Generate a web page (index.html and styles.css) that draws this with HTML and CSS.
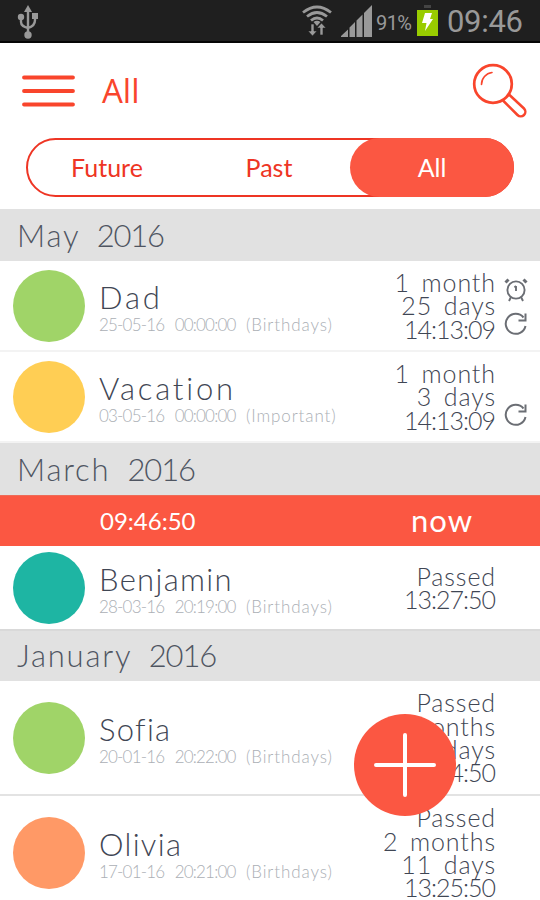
FILE: index.html
```html
<!DOCTYPE html>
<html lang="en">
<head>
  <meta charset="UTF-8">
  <meta name="viewport" content="width=device-width, initial-scale=1.0">
  <title>All events</title>
  <link rel="stylesheet" href="styles.css">
</head>
<body>

  <div class="status-bar">
    <svg class="usb" width="22" height="34" viewBox="0 0 22 34">
      <path d="M11 4v25M4 13v4c0 4 3 5 7 6M18 11v4c0 5-3 7-7 8" fill="none" stroke="#999" stroke-width="2.4"/>
      <path d="M11 0l4 7H7z" fill="#999"/>
      <circle cx="4" cy="12" r="3.2" fill="#999"/>
      <path d="M15 8h6v6h-6z" fill="#999"/>
      <circle cx="11" cy="30" r="3.7" fill="#999"/>
    </svg>
    <svg class="wifi" width="30" height="32" viewBox="0 0 30 32">
      <g fill="none" stroke="#999" stroke-width="2.8">
        <path d="M1 7.500q14-11 28 0"/>
        <path d="M5 11.500q10-8 20 0"/>
        <path d="M9 15.500q6-5 12 0"/>
      </g>
      <path d="M11.500 17q3.500-2.500 7 0L15 21z" fill="#999"/>
      <path d="M9 19h3v7h3l-4.500 5L6 26h3zM18 30h3v-7h3l-4.500-5-4.500 5h3z" fill="#999" stroke="#1f1f1f" stroke-width=".6"/>
    </svg>
    <svg class="signal" width="32" height="32" viewBox="0 0 32 32">
      <path d="M0 32V31L7 24.500V32zM8.500 32V22.500L14 17V32zM15.500 32V15.500L21.500 9.500V32zM23 32V8L31 0V32z" fill="#999"/>
    </svg>
    <span class="percent">91%</span>
    <svg class="battery" width="21" height="32" viewBox="0 0 21 32">
      <path d="M7 0h7v3H7z" fill="#444"/>
      <path d="M0 5h21v26H0z" fill="#99cc00"/>
      <path d="M8 8h7l-2 6h3L8 26l1.500-8H5z" fill="#fff"/>
    </svg>
    <span class="clock">09:46</span>
  </div>

  <header class="header">
    <svg class="menu" width="54" height="34" viewBox="0 0 54 34">
      <path d="M3 3.500h49M3 17h49M3 30.500h49" stroke="#f9452c" stroke-width="3.800" stroke-linecap="round"/>
    </svg>
    <h1>All</h1>
    <svg class="search" width="56" height="56" viewBox="0 0 56 56" fill="none" stroke="#f9452c">
      <circle cx="21" cy="21" r="18.800" stroke-width="2.700"/>
      <path d="M9.500 21.500a12 12 0 0 1 10.500-12" stroke-width="1.600" stroke-linecap="round"/>
      <path d="M31 37.500l14.500 14.500a4.500 4.500 0 0 0 6.500-6.500l-15-14" stroke-width="2.500"/>
    </svg>
  </header>

  <nav class="tabs">
    <a class="tab">Future</a>
    <a class="tab">Past</a>
    <a class="tab active">All</a>
  </nav>

  <main>
    <h2 class="month">May <span class="year">2016</span></h2>
    <div class="event">
      <span class="dot green"></span>
      <div class="info">
        <p class="name wide">Dad</p>
        <p class="date">25-05-16 00:00:00 <span class="category">(Birthdays)</span></p>
      </div>
      <p class="left">1 month<br>25 days<br><span class="time">14:13:09</span></p>
      <div class="icons">
        <svg width="24" height="24" viewBox="0 0 24 24" fill="none" stroke="#6b6e74" stroke-width="1.900">
          <circle cx="12" cy="12" r="8.600"/>
          <path d="M12 8v5M10.500 9.500L12 8M7 19l-2 4M17 19l2 4"/>
          <path d="M1.500 4.500l3-3M22.500 4.500l-3-3" stroke-width="3"/>
        </svg>
        <svg width="24" height="24" viewBox="0 0 24 24" fill="none" stroke="#6b6e74" stroke-width="2">
          <path d="M19.500 5.500A10 10 0 1 0 21.500 14M21.500 1.500v7h-7"/>
        </svg>
      </div>
    </div>
    <div class="event">
      <span class="dot yellow"></span>
      <div class="info">
        <p class="name wide">Vacation</p>
        <p class="date">03-05-16 00:00:00 <span class="category">(Important)</span></p>
      </div>
      <p class="left">1 month<br>3 days<br><span class="time">14:13:09</span></p>
      <div class="icons">
        <svg width="24" height="24" viewBox="0 0 24 24" fill="none" stroke="#6b6e74" stroke-width="2">
          <path d="M19.500 5.500A10 10 0 1 0 21.500 14M21.500 1.500v7h-7"/>
        </svg>
      </div>
    </div>

    <h2 class="month">March <span class="year">2016</span></h2>
    <div class="now">
      <span class="now-time">09:46:50</span>
      <span class="now-label">now</span>
    </div>
    <div class="event short">
      <span class="dot teal"></span>
      <div class="info">
        <p class="name">Benjamin</p>
        <p class="date">28-03-16 20:19:00 <span class="category">(Birthdays)</span></p>
      </div>
      <p class="left">Passed<br><span class="time">13:27:50</span></p>
      <div class="icons"></div>
    </div>

    <h2 class="month last">January <span class="year">2016</span></h2>
    <div class="event tall">
      <span class="dot green"></span>
      <div class="info">
        <p class="name">Sofia</p>
        <p class="date">20-01-16 20:22:00 <span class="category">(Birthdays)</span></p>
      </div>
      <p class="left">Passed<br>2 months<br>8 days<br><span class="time">13:24:50</span></p>
      <div class="icons"></div>
    </div>
    <div class="event tall">
      <span class="dot orange"></span>
      <div class="info">
        <p class="name">Olivia</p>
        <p class="date">17-01-16 20:21:00 <span class="category">(Birthdays)</span></p>
      </div>
      <p class="left">Passed<br>2 months<br>11 days<br><span class="time">13:25:50</span></p>
      <div class="icons"></div>
    </div>
  </main>

  <button class="add" aria-label="Add">
    <svg width="62" height="64" viewBox="0 0 62 64">
      <path d="M31 2v60M2 32h58" stroke="#fff" stroke-width="4" stroke-linecap="round"/>
    </svg>
  </button>

</body>
</html>
```

FILE: styles.css
```css
* {
  box-sizing: border-box;
}

body {
  margin: 0;
  height: 900px;
  overflow: hidden;
  position: relative;
  background: #fff;
  font-family: Lato, "Liberation Sans", sans-serif;
  font-weight: 300;
  font-variant-ligatures: none;
  color: #3f4654;
}

h1,
h2,
p {
  margin: 0;
  font-weight: 300;
}

svg {
  display: block;
  flex: none;
}

/* status bar */
.status-bar {
  display: flex;
  align-items: center;
  height: 43px;
  padding: 0 18px 0 17px;
  background: #1f1f1f;
  border-bottom: 2px solid #050505;
  font-family: Roboto, sans-serif;
  font-weight: 400;
  color: #999;
}

.usb {
  margin-top: 3px;
}

.wifi {
  margin-left: auto;
}

.signal {
  margin-left: 9px;
}

.percent {
  width: 37px;
  margin-left: 3px;
  padding-top: 4px;
  font-size: 20px;
  letter-spacing: -0.6px;
}

.battery {
  margin-left: 4px;
}

.clock {
  width: 75px;
  margin-left: 9px;
  padding-top: 2px;
  font-size: 31px;
  letter-spacing: -0.3px;
}

/* header */
.header {
  display: flex;
  align-items: center;
  height: 95px;
  padding: 0 12px 0 21px;
}

.header h1 {
  margin-left: 27px;
  font-family: "Open Sans", sans-serif;
  font-size: 33px;
  font-weight: 400;
  color: #f9452c;
}

.search {
  margin-left: auto;
}

.tabs {
  display: grid;
  grid-template-columns: 1fr 1fr 160px;
  height: 59px;
  margin: 0 26px 12px;
  border: 2px solid #ee3524;
  border-radius: 30px;
}

.tab {
  display: flex;
  align-items: center;
  justify-content: center;
  padding: 0 4px 2px 0;
  font-size: 25px;
  font-weight: 400;
  color: #ee3524;
}

.tab.active {
  margin: -2px;
  padding-right: 0;
  border-radius: 30px;
  background: #fb5742;
  color: #fff;
}

/* list */
.month {
  height: 52px;
  padding-left: 17px;
  background: #e1e1e1;
  font-size: 31px;
  line-height: 52px;
  letter-spacing: 1.8px;
  word-spacing: 7px;
  color: #4f5561;
}

.month.last {
  height: 50px;
  line-height: 49px;
}

.year {
  letter-spacing: -1.2px;
}

.event {
  display: flex;
  align-items: center;
  height: 91px;
  padding: 0 12px 0 13px;
  border-bottom: 2px solid #f3f3f3;
}

.event.short {
  height: 85px;
  border-bottom-color: #d9d9d9;
}

.event.tall {
  height: 115px;
  border-bottom-color: #e3e3e3;
}

.dot {
  flex: none;
  width: 72px;
  height: 72px;
  border-radius: 50%;
}

.green {
  background: #a0d468;
}

.yellow {
  background: #ffce54;
}

.teal {
  background: #1eb5a3;
}

.orange {
  background: #ff9966;
}

.info {
  margin-left: 14px;
  padding-top: 3px;
  white-space: nowrap;
}

.name {
  font-size: 31px;
  line-height: 35px;
  letter-spacing: 1.3px;
}

.name.wide {
  letter-spacing: 2.8px;
}

.date {
  font-size: 17px;
  line-height: 20px;
  letter-spacing: -0.8px;
  word-spacing: 6.5px;
  color: #abafb5;
}

.category {
  letter-spacing: 0.9px;
}

.left {
  margin-left: auto;
  padding-top: 1px;
  font-size: 25px;
  line-height: 23.300px;
  letter-spacing: 0.9px;
  text-align: right;
  white-space: nowrap;
  word-spacing: 4px;
}

.time {
  margin-right: 1px;
  letter-spacing: -1px;
}

.icons {
  display: flex;
  flex-direction: column;
  justify-content: flex-end;
  gap: 10px;
  width: 24px;
  height: 60px;
  margin-left: 8px;
}

.now {
  display: flex;
  align-items: center;
  justify-content: space-between;
  height: 51px;
  padding: 0 67px 2px 100px;
  background: #fb5742;
  border-top: 1px solid #ee6b58;
  color: #fff;
}

.now-time {
  font-size: 24px;
  font-weight: 400;
}

.now-label {
  font-size: 31px;
  font-weight: 400;
  letter-spacing: 1px;
}

.add {
  position: absolute;
  top: 714px;
  left: 354px;
  display: flex;
  align-items: center;
  justify-content: center;
  width: 102px;
  height: 102px;
  padding: 0;
  border: none;
  border-radius: 50%;
  background: #fb5742;
}
```
